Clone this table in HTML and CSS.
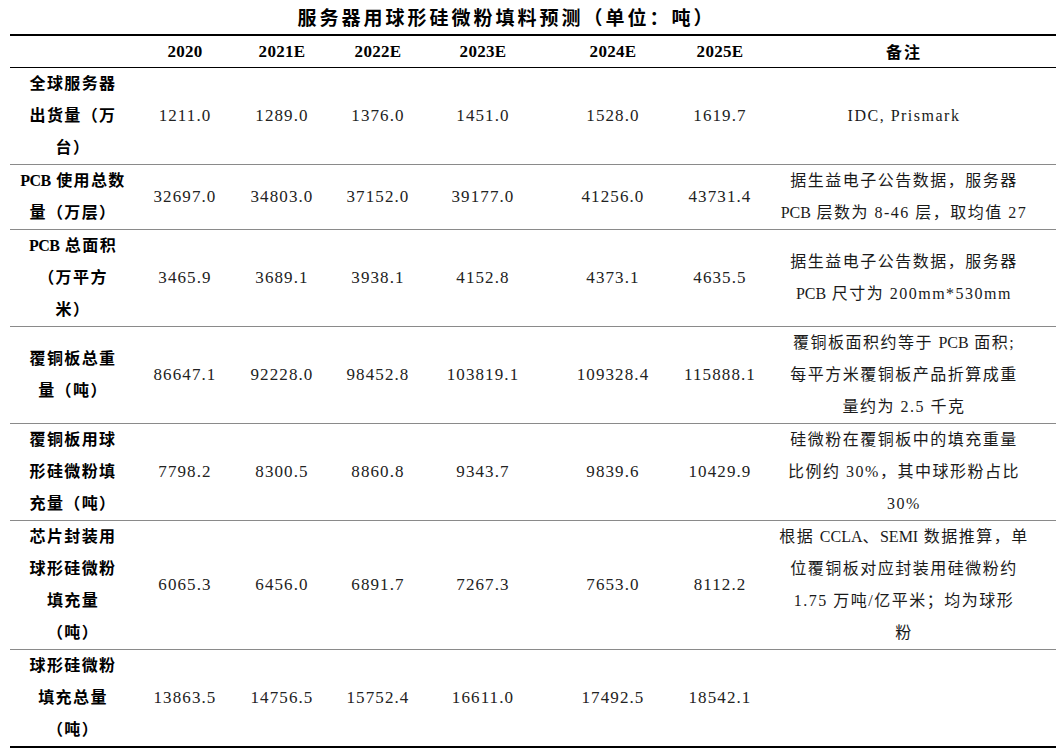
FILE: index.html
```html
<!DOCTYPE html>
<html lang="zh-CN">
<head>
<meta charset="utf-8">
<title>服务器用球形硅微粉填料预测</title>
<link rel="stylesheet" href="styles.css">
</head>
<body>
<div class="page">
  <div class="title">服务器用球形硅微粉填料预测（单位：吨）</div>
  <table class="data">
    <colgroup>
      <col class="c-label"><col class="c-2020"><col class="c-2021"><col class="c-2022"><col class="c-2023"><col class="c-2024"><col class="c-2025"><col class="c-note">
    </colgroup>
    <thead>
      <tr>
        <th></th>
        <th>2020</th>
        <th>2021E</th>
        <th>2022E</th>
        <th>2023E</th>
        <th class="y24">2024E</th>
        <th>2025E</th>
        <th class="note">备注</th>
      </tr>
    </thead>
    <tbody>
      <tr>
        <td class="label">全球服务器<br>出货量（万<br>台）</td>
        <td>1211.0</td><td>1289.0</td><td>1376.0</td><td>1451.0</td><td class="y24">1528.0</td><td>1619.7</td>
        <td class="note">IDC, Prismark</td>
      </tr>
      <tr>
        <td class="label"><span class="lat">PCB</span> 使用总数<br>量（万层）</td>
        <td>32697.0</td><td>34803.0</td><td>37152.0</td><td>39177.0</td><td class="y24">41256.0</td><td>43731.4</td>
        <td class="note">据生益电子公告数据，服务器<br><span class="lat">PCB</span> 层数为 8-46 层，取均值 27</td>
      </tr>
      <tr>
        <td class="label"><span class="lat">PCB</span> 总面积<br>（万平方<br>米）</td>
        <td>3465.9</td><td>3689.1</td><td>3938.1</td><td>4152.8</td><td class="y24">4373.1</td><td>4635.5</td>
        <td class="note">据生益电子公告数据，服务器<br><span class="lat">PCB</span> 尺寸为 200mm*530mm</td>
      </tr>
      <tr>
        <td class="label">覆铜板总重<br>量（吨）</td>
        <td>86647.1</td><td>92228.0</td><td>98452.8</td><td>103819.1</td><td class="y24">109328.4</td><td>115888.1</td>
        <td class="note">覆铜板面积约等于 <span class="lat">PCB</span> 面积;<br>每平方米覆铜板产品折算成重<br>量约为 2.5 千克</td>
      </tr>
      <tr>
        <td class="label">覆铜板用球<br>形硅微粉填<br>充量（吨）</td>
        <td>7798.2</td><td>8300.5</td><td>8860.8</td><td>9343.7</td><td class="y24">9839.6</td><td>10429.9</td>
        <td class="note">硅微粉在覆铜板中的填充重量<br>比例约 30%，其中球形粉占比<br>30%</td>
      </tr>
      <tr>
        <td class="label">芯片封装用<br>球形硅微粉<br>填充量<br>（吨）</td>
        <td>6065.3</td><td>6456.0</td><td>6891.7</td><td>7267.3</td><td class="y24">7653.0</td><td>8112.2</td>
        <td class="note">根据 <span class="lat">CCLA</span>、<span class="lat">SEMI</span> 数据推算，单<br>位覆铜板对应封装用硅微粉约<br>1.75 万吨/亿平米；均为球形<br>粉</td>
      </tr>
      <tr class="last">
        <td class="label">球形硅微粉<br>填充总量<br>（吨）</td>
        <td>13863.5</td><td>14756.5</td><td>15752.4</td><td>16611.0</td><td class="y24">17492.5</td><td>18542.1</td>
        <td class="note"></td>
      </tr>
    </tbody>
  </table>
</div>
</body>
</html>
```

FILE: styles.css
```css
html, body {
  margin: 0;
  padding: 0;
  background: #ffffff;
}

.page {
  width: 1063px;
  height: 754px;
  background: #ffffff;
  color: #111111;
  font-family: "Liberation Serif", "Noto Sans CJK SC", serif;
}

.title {
  height: 34px;
  line-height: 38px;
  text-align: center;
  padding-right: 50px;
  font-family: "Liberation Serif", "Noto Sans CJK SC", serif;
  font-weight: 700;
  font-size: 19px;
  letter-spacing: 3px;
  color: #000000;
}

.data {
  margin-left: 10px;
  width: 1046px;
  border-collapse: collapse;
  table-layout: fixed;
  border-top: 2px solid #000000;
  border-bottom: 2px solid #000000;
}

.c-label { width: 126px; }
.c-2020 { width: 98px; }
.c-2021 { width: 96px; }
.c-2022 { width: 96px; }
.c-2023 { width: 114px; }
.c-2024 { width: 130px; }
.c-2025 { width: 100px; }
.c-note { width: 286px; }

.data th,
.data td {
  padding: 0;
  text-align: center;
  vertical-align: middle;
  white-space: nowrap;
}

.data th {
  height: 31px;
  line-height: 31px;
  font-size: 17px;
  font-weight: 700;
  color: #000000;
  border-bottom: 1px solid #000000;
  letter-spacing: 0.3px;
}

.data th.note {
  font-family: "Noto Sans CJK SC", sans-serif;
  font-size: 16px;
  letter-spacing: 2px;
  padding-right: 18px;
}

.data td {
  line-height: 32px;
  font-size: 17px;
  letter-spacing: 1.1px;
  color: #222222;
  border-bottom: 1px solid #8a8a8a;
}

.data tr.last td {
  border-bottom: none;
}

.data .y24 {
  padding-left: 16px;
}

.data td.label {
  font-family: "Liberation Serif", "Noto Sans CJK SC", sans-serif;
  font-weight: 700;
  font-size: 16px;
  letter-spacing: 1.4px;
  color: #000000;
}

.data td.note {
  font-size: 16px;
  letter-spacing: 1.5px;
  color: #1a1a1a;
  padding-right: 18px;
}

.data .lat {
  letter-spacing: 0;
}

.data td.label .lat {
  letter-spacing: -0.5px;
}
```
